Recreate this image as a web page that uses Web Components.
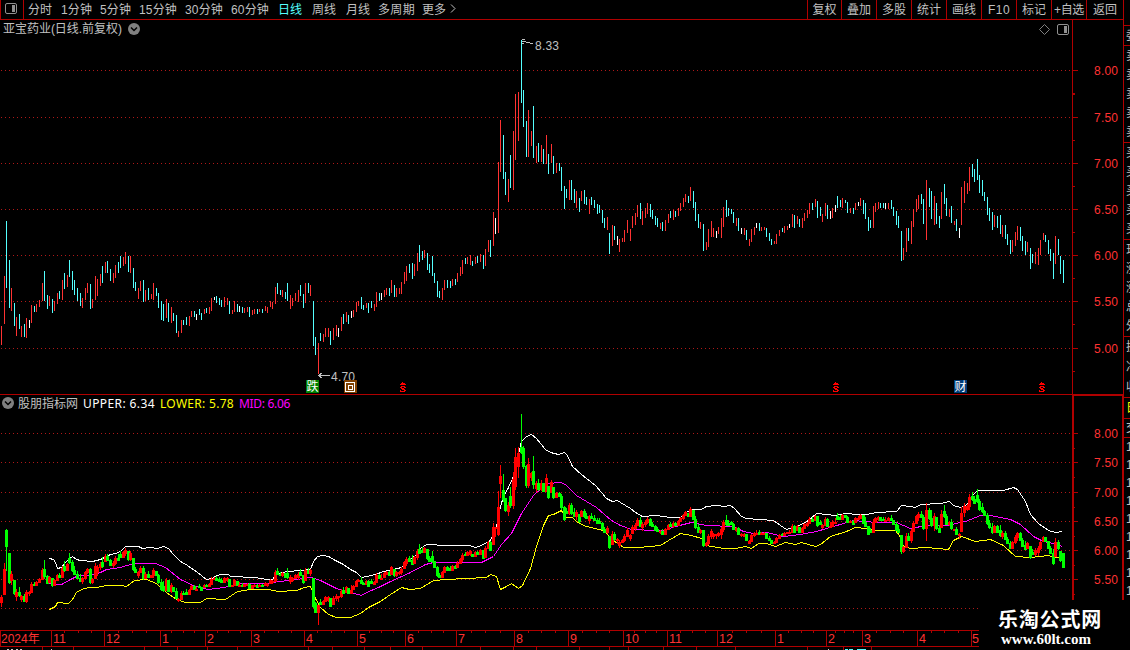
<!DOCTYPE html>
<html lang="zh-CN">
<head>
<meta charset="utf-8">
<title>亚宝药业 日线</title>
<style>
	body {
		margin: 0;
		width: 1130px;
		height: 650px;
		overflow: hidden;
		background: #000;
		color: #c0c0c0;
		font: 12px/15px "Liberation Sans", "Noto Sans CJK SC", sans-serif;
		--line: #b00000;
	}
</style>
</head>
<body>
<stock-app></stock-app>

<script>
// x top bottom, prefixed with r (up), c (down), w (flat)
const BARS = `r1,326,345 r4,276,324 c6,221,288 c9,260,308 r11,288,311 c14,303,326 r16,317,336 c19,314,329 r21,326,337 c24,324,337 r26,318,338 w29,320,328
r31,305,323 c34,306,312 r36,304,312 r39,300,307 r42,283,301 c44,271,301 c47,295,309 r49,296,306 c52,299,313 r54,301,311 r57,293,304 c59,291,299 r62,280,300 c64,273,289
r67,275,287 c69,260,277 c72,271,290 c74,280,295 c77,288,301 c80,293,306 r82,298,308 r85,288,300 r87,283,293 c90,284,309 r92,299,308 r95,276,300 r97,279,296 r100,274,286
c102,266,283 r105,262,273 c107,261,273 c110,269,281 r113,273,283 r115,265,278 c118,262,273 c120,256,268 r123,257,266 r125,252,264 c128,256,272 r130,256,273 c133,268,288
c135,282,291 r138,288,299 r140,281,291 c143,280,302 r145,290,301 c148,288,300 r151,294,299 r153,283,300 c156,288,296 c158,293,308 c161,301,320 c163,304,321 r166,299,318
c168,303,322 r171,307,323 c173,313,321 c176,315,333 r178,331,337 r181,320,333 c183,320,325 c186,317,325 r189,316,326 r191,311,317 c194,311,317 w196,314,320 c199,309,315
c201,313,320 r204,309,314 c206,308,313 r209,307,314 r211,298,311 w214,297,300 c216,296,303 c219,298,305 c221,300,307 r224,297,307 r227,298,305 c229,301,314 r232,310,314
r234,301,312 c237,304,312 w239,306,312 c242,307,313 r244,308,313 r247,307,312 c249,307,317 r252,310,315 r254,309,314 c257,309,314 r259,309,312 c262,309,313 r265,306,311
r267,307,313 r270,301,307 r272,302,309 r275,287,304 c277,283,294 c280,290,295 r282,290,297 c285,292,299 c287,283,301 r290,295,309 r292,298,306 r295,293,301 r298,290,302
c300,285,296 c303,294,308 r305,283,303 c308,283,293 r310,285,296 c313,301,346 c315,337,355 r318,343,374 c320,333,341 r323,334,342 r325,328,337 r328,328,337 c330,331,345
r333,328,340 r336,325,336 w338,328,337 r341,317,331 c343,314,324 r346,312,322 c348,315,324 w351,311,318 r353,310,317 r356,302,312 r358,301,306 c361,297,309 c363,305,310
r366,303,308 c368,303,313 c371,301,308 r374,304,311 r376,292,307 c379,293,301 w381,293,300 r384,290,297 r386,288,295 c389,288,296 r391,280,293 c394,285,297 r396,288,297
r399,288,294 r401,282,294 r404,272,284 r406,266,281 c409,264,273 c412,263,279 r414,264,276 r417,253,271 c419,245,262 c422,251,260 r424,250,258 c427,253,270 c429,264,273
c432,256,276 c434,273,283 c437,281,297 c439,291,298 r442,288,300 r444,280,290 c447,280,288 c450,281,288 r452,279,286 c455,279,285 r457,273,282 r460,267,276 r462,260,274
c465,258,264 r467,257,264 r470,255,265 c472,261,266 r475,257,264 c477,256,263 r480,254,262 c483,255,269 r485,249,266 r488,240,252 c490,240,257 r493,212,246 w495,218,234
r498,162,233 r500,120,172 c503,135,179 c505,172,195 r508,179,202 c510,155,188 r513,131,190 r515,94,160 r518,92,141 c521,40,103 c523,90,127 c526,121,157 r528,110,157
r531,131,146 c533,106,158 r536,146,163 c538,143,162 r541,145,162 c543,149,164 r546,135,164 c548,154,174 r551,144,163 c553,156,174 r556,163,173 c559,163,171 c561,167,191
c564,186,209 c566,189,198 r569,180,200 c571,180,200 c574,189,203 r576,191,208 c579,198,212 r581,191,201 c584,190,204 c586,197,205 r589,199,214 c591,197,205 c594,200,208
c597,204,214 c599,205,213 c602,210,223 c604,218,228 r607,217,230 c609,233,254 r612,225,246 c614,226,240 w617,236,245 r619,239,252 r622,238,242 r624,230,242 r627,220,233
r630,229,241 r632,216,228 r635,213,225 r637,205,217 c640,203,219 r642,211,225 r645,208,218 r647,203,214 c650,204,217 c652,210,219 c655,216,225 c657,218,227 r660,223,229
c662,222,231 r665,220,231 r668,214,223 c670,211,218 r673,210,220 c675,211,217 r678,208,216 r680,203,211 r683,198,207 r685,194,202 c688,196,203 r690,187,201 c693,191,208
c695,202,221 c698,214,228 r700,222,229 c703,224,251 r706,242,250 r708,229,247 r711,221,237 r713,228,237 w716,231,238 r718,227,234 r721,218,238 r723,207,227 c726,200,217
c728,208,216 c731,209,214 c733,212,223 r736,218,226 c738,218,231 w741,228,234 r744,228,235 c746,230,240 r749,239,246 r751,229,242 r754,227,235 w756,223,228 c759,223,231
r761,227,231 r764,227,230 c766,228,237 c769,233,241 c771,239,245 r774,241,244 r776,234,244 r779,230,236 c782,228,232 r784,226,233 r787,226,230 w789,224,228 r792,214,227
c794,215,228 r797,216,224 c799,219,227 r802,218,228 r804,213,221 r807,210,218 r809,203,214 c812,203,210 r815,199,207 c817,201,218 c820,207,216 r822,214,222 r825,203,216
c827,205,219 w830,211,219 r832,208,218 w835,205,212 c837,196,208 c840,200,207 r842,198,208 c845,200,203 c847,202,213 r850,208,213 c853,208,214 r855,203,210 w858,202,206
r860,198,206 c863,200,214 c865,203,219 c868,217,231 c870,220,228 r873,206,228 r875,203,212 r878,202,209 c880,203,208 c883,203,208 w885,203,209 r888,203,209 c891,200,209
c893,207,216 c896,211,225 c898,216,228 c901,231,261 r903,248,260 r906,228,252 c908,228,241 r911,221,244 r913,209,227 r916,199,212 r918,195,209 c921,194,204 c923,199,224
r926,180,240 c929,188,207 c931,191,219 r934,196,225 c936,203,224 c939,216,228 r941,192,219 c944,184,204 c946,198,216 r949,209,217 c951,206,223 r954,221,225 c956,219,231
w959,228,238 r961,187,225 r964,181,203 r967,183,194 r969,167,191 c972,164,177 c974,169,182 c977,159,180 c979,175,193 c982,180,196 c984,192,201 c987,197,215 c989,208,221
c992,212,230 r994,215,227 c997,216,228 c1000,215,234 r1002,225,237 c1005,225,239 c1007,234,245 c1010,240,254 r1012,240,252 r1015,232,246 r1017,226,240 c1020,227,241
c1022,236,251 c1025,241,255 r1027,242,252 c1030,248,269 c1032,254,263 r1035,252,264 r1038,248,265 r1040,240,255 r1043,233,240 c1045,235,242 c1048,240,254 c1050,249,261
c1053,253,279 r1055,236,264 c1058,239,255 c1060,256,274 c1063,260,283`.split(/\s+/).map(s => {
	const [x, top, bottom] = s.slice(1).split(",").map(Number)
	return { kind: s[0], x, top, bottom }
})

const UPPER = "49,558 53,559 55,562 57,568 61,567 65,562 69,558 72,556 76,559 80,560 92,561 100,559 110,554 115,553 120,551 125,546 138,546 142,548 150,547 157,548 163,546 168,548 173,554 180,561 187,565 197,572 206,579 212,578 216,575 221,574 228,574 230,576 255,577 266,579 272,579 276,574 281,572 288,571 300,570 310,569 313,561 317,556 323,555 328,556 335,560 343,564 350,569 356,572 361,577 366,576 375,574 383,571 393,569 401,567 408,560 415,555 420,548 426,544 446,545 469,545 475,547 481,545 490,540 496,526 500,506 503,496 508,487 513,476 517,458 521,441 526,436 531,434 536,438 545,449 550,452 558,454 564,452 567,455 572,466 581,474 595,485 601,492 606,498 612,501 617,500 620,502 630,508 635,512 642,516 656,515 670,517 680,517 686,512 691,509 701,509 706,506 716,505 724,506 730,505 734,508 741,516 746,518 773,520 780,525 786,529 793,527 801,524 808,520 816,513 826,514 835,515 845,513 858,514 866,514 876,512 896,511 901,505 910,506 915,507 920,504 940,503 949,501 953,505 960,507 966,505 971,496 977,490 1003,490 1013,487 1017,489 1025,501 1030,514 1038,523 1048,530 1055,532 1062,531"
const MID = "49,583 53,584 61,584 70,579 78,575 88,575 100,572 106,569 120,567 133,563 155,563 165,567 180,579 195,586 208,589 223,587 240,583 268,583 278,581 290,580 303,578 311,577 320,580 330,585 336,588 361,595 366,592 378,587 390,581 408,573 425,564 433,562 481,562 493,556 501,544 511,533 521,513 533,495 546,483 561,482 566,485 576,495 596,507 611,520 620,525 631,529 655,530 663,530 675,526 691,522 706,525 733,526 743,531 753,533 766,532 783,536 800,534 816,531 833,526 853,520 876,522 896,522 910,528 926,525 946,525 965,521 980,515 990,515 1010,519 1020,524 1033,536 1043,541 1053,543 1062,546"
const LOWER = "49,609 55,606 57,602 68,603 72,599 76,592 81,589 88,587 96,587 106,585 120,585 126,586 134,580 146,579 156,583 166,592 176,599 185,602 200,602 206,598 225,599 237,591 250,589 268,589 278,591 296,590 304,587 310,586 315,598 320,607 328,614 336,617 350,617 360,613 368,607 380,601 390,594 401,587 409,589 420,588 433,580 446,579 486,577 490,574 496,576 500,589 506,586 511,583 518,588 522,585 530,568 536,546 543,525 548,515 553,514 561,510 565,517 572,517 577,522 586,526 603,530 613,540 623,547 638,547 660,545 668,540 680,533 691,535 701,538 706,545 723,548 735,548 745,546 751,548 758,543 766,543 775,546 785,542 795,544 801,542 815,546 820,544 830,536 846,531 855,527 866,528 876,530 895,530 899,535 903,546 910,548 926,547 948,549 953,540 961,536 975,541 990,539 1003,545 1015,556 1030,557 1048,555 1055,557 1062,557"

// spreads its text over exactly the width given, in px
customElements.define("fit-text", class extends HTMLElement {
	connectedCallback() {
		this.attachShadow({mode: "open"}).innerHTML = `
			<style>
				:host { display: inline-block; white-space: nowrap; flex: none; }
			</style>
			<span><slot></slot></span>
		`
		const span = this.shadowRoot.querySelector("span")
		const width = +this.getAttribute("w")
		const gap = (width - span.getBoundingClientRect().width) / this.textContent.length
		span.style.letterSpacing = gap + "px"
		this.style.width = width + "px"
	}
})

customElements.define("round-toggle", class extends HTMLElement {
	connectedCallback() {
		this.attachShadow({mode: "open"}).innerHTML = `
			<style>
				:host { display: block; width: 12px; height: 12px; flex: none; }
				svg { display: block; }
			</style>
			<svg width="12" height="12">
				<circle cx="6" cy="6" r="6" fill="#808080"/>
				<path d="M3 4.5L6 7.5L9 4.5" fill="none" stroke="#000" stroke-width="1.5"/>
			</svg>
		`
	}
})

customElements.define("panel-icon", class extends HTMLElement {
	connectedCallback() {
		this.attachShadow({mode: "open"}).innerHTML = `
			<style>
				:host { display: block; width: 12px; height: 11px; flex: none; }
				svg { display: block; }
			</style>
			<svg width="12" height="11">
				<rect x=".5" y=".5" width="11" height="10" rx="1.5" fill="none" stroke="#909090"/>
				<rect x="7" y="2" width="3" height="7" fill="#909090"/>
			</svg>
		`
	}
})

customElements.define("tool-bar", class extends HTMLElement {
	connectedCallback() {
		// [label, gap before, width]
		const periods = [["分时", 4, 24], ["1分钟", 9, 31], ["5分钟", 8, 31], ["15分钟", 8, 38], ["30分钟", 8, 38], ["60分钟", 8, 38],
			["日线", 9, 24], ["周线", 10, 24], ["月线", 10, 24], ["多周期", 8, 37], ["更多", 7, 24]]
		// [label, cell width, text width]
		const tools = [["复权", 34, 24], ["叠加", 35, 24], ["多股", 35, 24], ["统计", 35, 24], ["画线", 35, 24], ["F10", 35, 22],
			["标记", 35, 24], ["+自选", 35, 30], ["返回", 37, 24]]
		this.attachShadow({mode: "open"}).innerHTML = `
			<style>
				:host { display: flex; height: 19px; border-bottom: 1px solid var(--line); line-height: 20px; }
				.box { box-sizing: border-box; width: 24px; padding: 3px 0 0 4px; border: solid var(--line); border-width: 0 1px; }
				.on { color: #5ff; }
				.more { margin: 4px 0 0 4px; }
				.tools { display: flex; margin-left: auto; }
				.tool { box-sizing: border-box; display: flex; justify-content: center; border-left: 1px solid var(--line); }
			</style>
			<div class="box"><panel-icon></panel-icon></div>
			${periods.map(([t, gap, w]) => `<fit-text w="${w}" class="${t == "日线" ? "on" : ""}" style="margin-left:${gap}px">${t}</fit-text>`).join("")}
			<svg class="more" width="8" height="9"><path d="M1 .5L5 4.5L1 8.5" fill="none" stroke="#c0c0c0"/></svg>
			<div class="tools">${tools.map(([t, box, w]) => `<div class="tool" style="width:${box}px"><fit-text w="${w}">${t}</fit-text></div>`).join("")}</div>
		`
	}
})

customElements.define("pane-title", class extends HTMLElement {
	connectedCallback() {
		this.attachShadow({mode: "open"}).innerHTML = `
			<style>
				:host { display: flex; align-items: center; height: 17px; }
			</style>
			<slot></slot>
		`
	}
})

// plot area with dotted grid and price scale; y values are window coordinates
class ChartPane extends HTMLElement {
	grid(rows) {
		return rows.map(y => `<path d="M1 ${y + .5}H1070" stroke="#b01818" stroke-dasharray="1 3"/>`).join("")
	}

	scale(rows, first, step) {
		let s = ""
		rows.forEach((y, i) => {
			const price = first - i * .5
			if (price >= this.lowest)
				s += `<path d="M1073 ${y + .5}h5M1073 ${Math.round(y + step / 2) + .5}h2" stroke="#b00000"/>
					<text x="1094" y="${y + 5}" textLength="24" fill="#ff3232">${price.toFixed(2)}</text>`
		})
		return s
	}

	render(top, height, body) {
		this.attachShadow({mode: "open"}).innerHTML = `
			<style>
				:host { display: block; height: ${height}px; }
				svg { display: block; font-size: 12px; overflow: visible; }
				path, polyline, .crisp { shape-rendering: crispEdges; }
			</style>
			<svg width="1123" height="${height}" viewBox="0 ${top} 1123 ${height}">${body}</svg>
		`
	}
}

customElements.define("price-pane", class extends ChartPane {
	get lowest() { return 5 }

	connectedCallback() {
		const rows = [70, 117, 163, 209, 255, 301, 348]
		const colors = { r: "#ff3232", c: "#54ffff", w: "#fff" }
		const bars = BARS.map(b => `<rect class="crisp" x="${b.x}" y="${b.top}" width="1" height="${b.bottom - b.top}" fill="${colors[b.kind]}"/>`).join("")
		const dividend = x => `<path transform="translate(${x} 382)" stroke="#f00"
			d="M2 .5h1M1 1.500h4M0 2.500h6M1 4.500h4M0 5.500h2M4 5.500h2M1 6.500h3M2 7.500h3M0 8.500h1M4 8.500h2M0 9.500h5"/>`
		this.render(37, 357, `
			${this.grid(rows)}
			<path d="M1072.5 20V394M1073 94.5h2" stroke="#b00000"/>
			${this.scale(rows, 8, 46)}
			${bars}
			<g stroke="#c0c0c0" fill="none">
				<path d="M522 41.5h4M522 39.5h3M522 43.5h2M526 42.5h4M530 43.5h3"/>
				<path d="M318 375.5h12M319 374.5h2M320 373.5h2M319 376.5h2M320 377.5h2"/>
			</g>
			<text x="535" y="50" textLength="24" fill="#c0c0c0">8.33</text>
			<text x="331" y="381" textLength="24" fill="#c0c0c0">4.70</text>
			<rect x="306" y="380" width="13" height="13" fill="#008000"/>
			<text x="306.500" y="391" fill="#fff">跌</text>
			<rect x="344" y="380" width="13" height="13" fill="#804000"/>
			<path d="M345.500 382.500h9v9h-9zM348.500 385.500h4v4h-4z" fill="none" stroke="#fff"/>
			<rect x="954" y="380" width="13" height="13" fill="#003c78"/>
			<text x="954.500" y="391" fill="#fff">财</text>
			${dividend(400)}${dividend(833)}${dividend(1039)}
		`)
	}
})

customElements.define("band-pane", class extends ChartPane {
	get lowest() { return 5.5 }

	connectedCallback() {
		const rows = [433, 462, 492, 521, 550, 579, 608]
		const toY = y => Math.round(433 + (y - 70) * .6325)
		const fixed = { 6: [530, 547], 9: [553, 583], 313: [578, 607], 318: [605, 613], 498: [507, 535], 500: [476, 484], 503: [490, 500], 515: [457, 487], 521: [447, 453], 961: [513, 532], 1063: [553, 568] }
		let prev = 330
		const bars = BARS.map(b => {
			const up = b.kind == "r"
			const size = b.bottom - b.top
			const close = up ? b.top + size * .2 : b.kind == "c" ? b.bottom - size * .15 : prev
			let open = Math.max(b.top, Math.min(b.bottom, prev))
			if (up) open = Math.max(open, close + size * .4)
			if (b.kind == "c") open = Math.min(open, close - size * .4)
			prev = close
			let [t, e] = fixed[b.x] || [toY(Math.min(open, close)), toY(Math.max(open, close)) + 1]
			e = Math.max(e, t + 2)
			return `<path d="M${b.x} ${toY(b.top)}h1V${toY(b.bottom)}h-1zM${b.x - 1} ${t}h3V${e}h-3z" fill="${b.kind == "c" ? "#0f0" : "#f00"}"/>`
		}).join("")
		const line = (points, color) => `<polyline points="${points}" transform="translate(.5 .5)" fill="none" stroke="${color}"/>`
		this.render(412, 218, `
			${this.grid(rows)}
			${this.scale(rows, 8, 29)}
			${line(UPPER, "#fff")}${line(MID, "#f0f")}${line(LOWER, "#ff0")}
			${bars}
		`)
	}
})

customElements.define("time-axis", class extends HTMLElement {
	connectedCallback() {
		const months = [["2024年", 0], ["11", 51], ["12", 104], ["1", 160], ["2", 205], ["3", 251], ["4", 304], ["5", 357], ["6", 405], ["7", 456],
			["8", 514], ["9", 568], ["10", 623], ["11", 667], ["12", 717], ["1", 775], ["2", 826], ["3", 862], ["4", 917], ["5", 971], ["", 979]]
		const below = [42, 73, 144, 177, 207, 237, 308, 332, 364, 390, 422, 480, 513, 536, 579, 609, 628, 663, 696, 735, 807, 843, 871]
		const cells = months.slice(0, -1).map(([label, x], i) => {
			const w = months[i + 1][1] - x
			return `<div style="width:${w}px">${label}${i && w > 20 ? `<svg width="${w}" height="2">${[.25, .5, .75].map(k => `<rect x="${Math.round(w * k)}" width="1" height="2" fill="#b00000"/>`).join("")}</svg>` : ""}</div>`
		}).join("")
		this.attachShadow({mode: "open"}).innerHTML = `
			<style>
				:host { display: block; width: 979px; height: 20px; color: #ff3232; }
				.row { display: flex; height: 15px; border: solid var(--line); border-width: 1px 0; }
				.row div { position: relative; box-sizing: border-box; border-left: 1px solid var(--line); padding-left: 1px; font-size: 12.5px; line-height: 16px; white-space: nowrap; }
				.row div:first-child { padding-left: 0; font-size: 12px; }
				.row div:last-child { padding-left: 0; }
				.row svg { position: absolute; left: -1px; top: 0; }
				.foot { display: block; }
			</style>
			<div class="row">${cells}</div>
			<svg class="foot" width="979" height="3">
				${below.map(x => `<rect x="${x}" width="1" height="3" fill="#b00000"/>`).join("")}
				<path d="M7 2.500h2m2 0h2m3 0h2m2 0h2M51 2.500h1M828 2.500h1" stroke="#ccc"/>
				<path d="M845 2.500h3m1 0h4m4 0h9" stroke="#5ff"/>
			</svg>
		`
	}
})

// left edge of the quote panel, cut off by the window
customElements.define("quote-strip", class extends HTMLElement {
	connectedCallback() {
		const blocks = [["", 25], ["委", 19], ["卖卖卖卖卖", 96], ["买买买买买", 96], ["现涨涨总外", 96], ["换净收", 60], ["日", 20], ["交", 18]]
		this.attachShadow({mode: "open"}).innerHTML = `
			<style>
				:host { display: block; width: 6px; height: 600px; border-left: 1px solid var(--line); overflow: hidden; }
				.block { display: flex; flex-direction: column; justify-content: space-around; border-bottom: 1px solid var(--line); padding-left: 2px; }
				.block span { line-height: 14px; }
				.times { display: grid; grid-auto-rows: 18px; padding-left: 2px; line-height: 18px; }
			</style>
			${blocks.map(([t, h]) => `<div class="block" style="height:${h}px${t == "日" ? ";color:#ff0" : ""}">${[...t].map(c => `<span>${c}</span>`).join("")}</div>`).join("")}
			<div class="times">${"1".repeat(9).split("").map(t => `<span>${t}</span>`).join("")}</div>
		`
	}
})

customElements.define("site-mark", class extends HTMLElement {
	connectedCallback() {
		this.attachShadow({mode: "open"}).innerHTML = `
			<style>
				:host { display: block; box-sizing: border-box; width: 151px; height: 50px; padding: 6px 0 0 19px; background: #000; color: #fff; }
				.name { height: 26px; font: bold 20px/26px "Noto Sans CJK SC", sans-serif; }
				.url { height: 14px; padding-left: 3px; font: bold 15px/14px "Liberation Serif", serif; }
			</style>
			<div class="name"><fit-text w="104">乐淘公式网</fit-text></div>
			<div class="url"><fit-text w="90">www.60lt.com</fit-text></div>
		`
	}
})

customElements.define("stock-app", class extends HTMLElement {
	connectedCallback() {
		this.attachShadow({mode: "open"}).innerHTML = `
			<style>
				:host { display: grid; grid-template-columns: 1123px 7px; width: 1130px; height: 650px; overflow: hidden; position: relative; }
				.main { display: flex; flex-direction: column; height: 650px; }
				.head { padding: 1px 54px 0 3px; height: 16px; }
				.head fit-text { padding-top: 1px; }
				.head round-toggle { margin-left: 6px; }
				.right { display: flex; align-items: center; gap: 7px; margin-left: auto; }
				.split { height: 1px; background: var(--line); }
				.sub { position: relative; }
				.frame { position: absolute; left: 1072px; top: -1px; width: 48px; height: 204px; border: 2px solid var(--line); border-bottom: 0; }
				.ind { height: 16px; padding: 0 0 1px 2px; font-family: "Noto Sans", "Noto Sans CJK SC", sans-serif; }
				.ind round-toggle { margin-right: 4px; }
				.ind fit-text { margin-right: 5px; }
				site-mark { position: absolute; right: 0; bottom: 0; }
			</style>
			<div class="main">
				<tool-bar></tool-bar>
				<pane-title class="head">
					<fit-text w="119">亚宝药业(日线.前复权)</fit-text>
					<round-toggle></round-toggle>
					<div class="right">
						<svg width="11" height="11"><path d="M5.500 .5L10.500 5.500L5.500 10.500L.5 5.500Z" fill="none" stroke="#808080"/></svg>
						<panel-icon></panel-icon>
					</div>
				</pane-title>
				<price-pane></price-pane>
				<div class="split"></div>
				<div class="sub">
					<div class="frame"></div>
					<pane-title class="ind">
						<round-toggle></round-toggle>
						<fit-text w="60">股朋指标网</fit-text>
						<fit-text w="72" style="color:#fff">UPPER: 6.34</fit-text>
						<fit-text w="74" style="color:#ff0">LOWER: 5.78</fit-text>
						<fit-text w="51" style="color:#f0f">MID: 6.06</fit-text>
					</pane-title>
					<band-pane></band-pane>
				</div>
				<time-axis></time-axis>
			</div>
			<quote-strip></quote-strip>
			<site-mark></site-mark>
		`
	}
})
</script>
</body>
</html>
